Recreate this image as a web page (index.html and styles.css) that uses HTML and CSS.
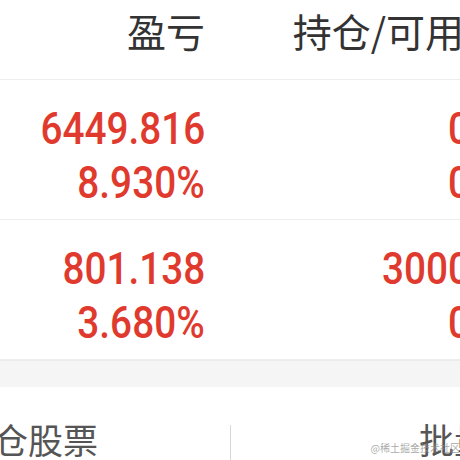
FILE: index.html
```html
<!DOCTYPE html>
<html lang="zh">
<head>
<meta charset="utf-8">
<link rel="stylesheet" href="styles.css">
</head>
<body>
<div class="page">
  <div class="head row-grid">
    <div class="col">盈亏</div>
    <div class="col shift">持仓/可用</div>
  </div>
  <div class="item row-grid">
    <div class="col num"><span>6449.816</span><span>8.930%</span></div>
    <div class="col num"><span>0</span><span>0</span></div>
  </div>
  <div class="item row-grid">
    <div class="col num"><span>801.138</span><span>3.680%</span></div>
    <div class="col num"><span>3000</span><span>0</span></div>
  </div>
  <div class="band"></div>
  <div class="bottom">
    <div class="tab left"><span>持仓股票</span></div>
    <div class="sep"></div>
    <div class="tab right"><span>批量</span></div>
  </div>
  <div class="mark">@稀土掘金技术社区</div>
</div>
</body>
</html>
```
FILE: styles.css
```css
html, body {
  margin: 0;
  padding: 0;
  background: #fff;
  overflow: hidden;
}
.page {
  position: relative;
  width: 460px;
  height: 460px;
  overflow: hidden;
  font-family: "Noto Sans CJK SC", "Noto Sans", sans-serif;
}
.row-grid {
  display: grid;
  grid-template-columns: 205px 265px;
  width: 470px;
}
.col {
  text-align: right;
  white-space: nowrap;
}
.shift {
  padding-right: 6px;
}
.head {
  height: 80px;
  border-bottom: 1px solid #eeeeee;
  box-sizing: border-box;
  font-size: 39px;
  line-height: 60px;
  color: #333;
}
.item {
  height: 140px;
  box-sizing: border-box;
  padding-top: 22px;
  border-bottom: 1px solid #eeeeee;
}
.num {
  display: flex;
  flex-direction: column;
  align-items: flex-end;
  font-family: Roboto, "Liberation Sans", sans-serif;
  font-weight: 500;
  font-size: 44px;
  line-height: 54px;
  color: #e03a2e;
}
.num span {
  display: block;
  transform: scaleX(0.88);
  transform-origin: right center;
}
.band {
  height: 27px;
  background: #f5f5f5;
  border-top: 1px solid #ebebeb;
  box-sizing: border-box;
}
.bottom {
  display: flex;
  height: 73px;
  align-items: flex-start;
}
.tab {
  display: flex;
  font-size: 35px;
  line-height: 40px;
  color: #555;
  white-space: nowrap;
  padding-top: 32px;
  min-width: 0;
  flex-shrink: 0;
}
.tab span {
  flex-shrink: 0;
}
.left {
  width: 230px;
  justify-content: flex-end;
  padding-right: 132px;
  box-sizing: border-box;
}
.sep {
  width: 1px;
  flex-shrink: 0;
  height: 40px;
  margin-top: 38px;
  background: #d8d8d8;
}
.right {
  padding-left: 188px;
}
.mark {
  position: absolute;
  right: 0;
  bottom: 6px;
  font-size: 10px;
  line-height: 12px;
  color: rgba(140, 140, 140, 0.75);
  white-space: nowrap;
}
```
